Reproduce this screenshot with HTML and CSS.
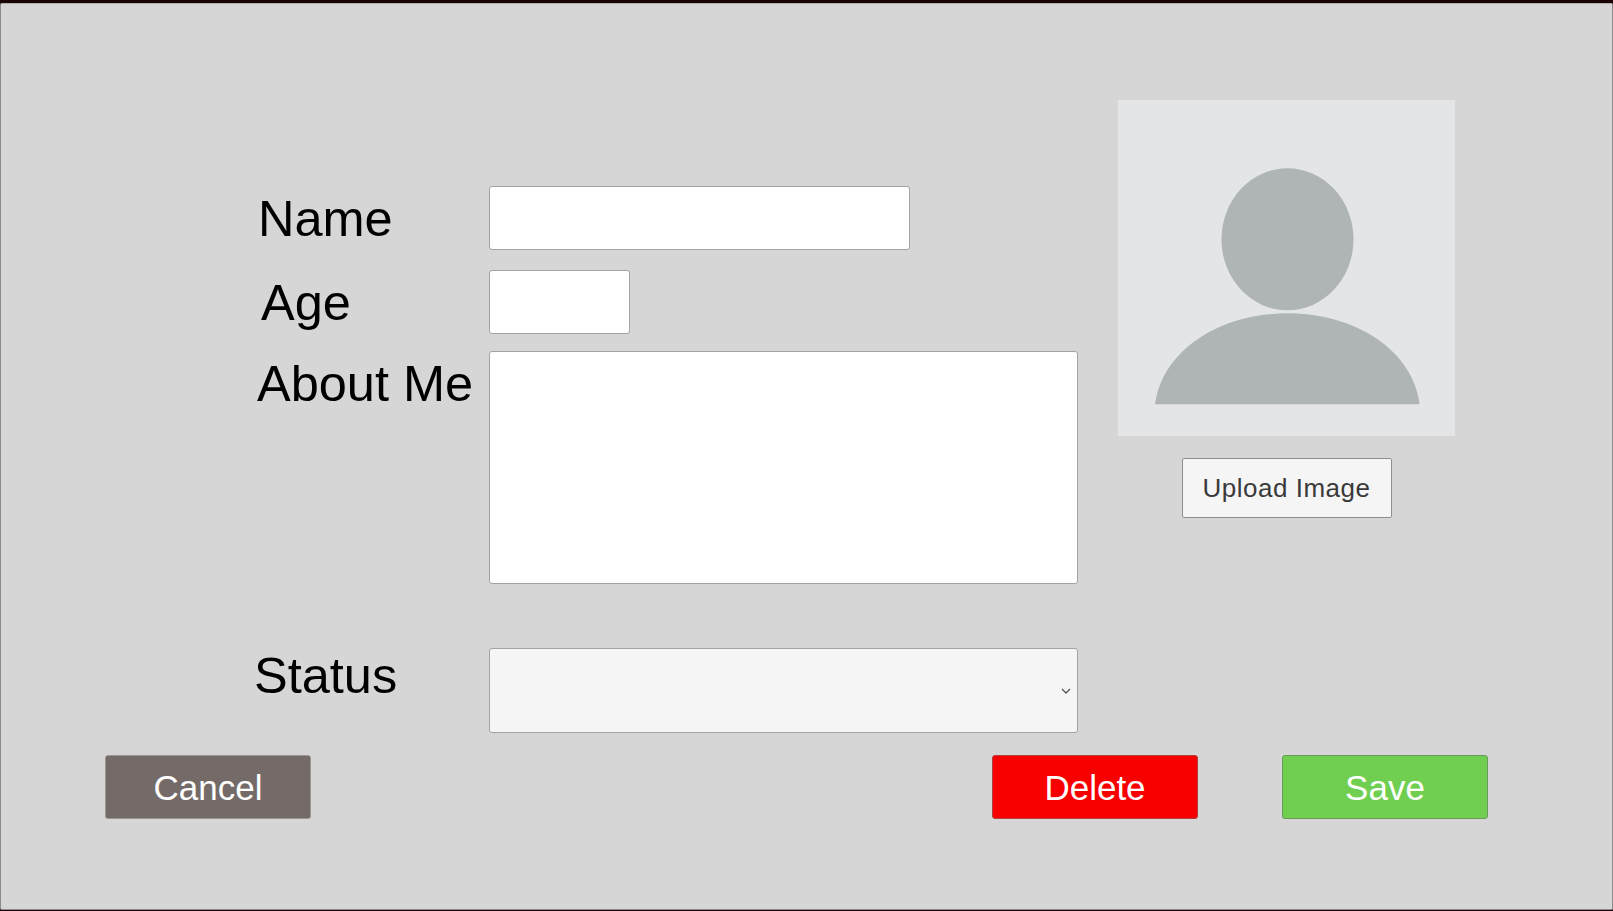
FILE: index.html
```html
<!DOCTYPE html>
<html lang="en">
<head>
    <meta charset="UTF-8">
    <meta name="viewport" content="width=device-width, initial-scale=1.0">
    <title>Edit Profile</title>
    <link rel="stylesheet" href="styles.css">
</head>
<body>

    <div class="panel">
        <div class="content">
            <form class="fields">
                <div class="row row-name">
                    <label class="label label-name" for="nameInput">Name</label>
                    <input class="field field-name" type="text" id="nameInput">
                </div>
                <div class="row row-age">
                    <label class="label label-age" for="ageInput">Age</label>
                    <input class="field field-age" type="text" id="ageInput">
                </div>
                <div class="row row-about">
                    <label class="label" for="aboutInput">About Me</label>
                    <textarea class="field field-about" id="aboutInput"></textarea>
                </div>
                <div class="row row-status">
                    <label class="label label-status" for="statusInput">Status</label>
                    <div class="select-wrap">
                        <select class="field field-status" id="statusInput">
                            <option></option>
                        </select>
                        <svg class="chevron" viewBox="0 0 10 6" width="10" height="6">
                            <path d="M1 1 L5 5 L9 1" fill="none" stroke="#555" stroke-width="1.3"/>
                        </svg>
                    </div>
                </div>
            </form>

            <div class="photo">
                <div class="avatar">
                    <svg viewBox="0 0.2 337 336" width="337" height="336">
                        <ellipse cx="169.5" cy="139.5" rx="66" ry="71" fill="#afb4b7"/>
                        <path d="M37 304.5 C44 251 101 213.5 169.5 213.5 C238 213.5 295 251 301.500 304.5 Z" fill="#afb4b7"/>
                    </svg>
                </div>
                <button class="upload" type="button">Upload Image</button>
            </div>
        </div>

        <div class="actions">
            <button class="btn btn-cancel" type="button">Cancel</button>
            <button class="btn btn-delete" type="button">Delete</button>
            <button class="btn btn-save" type="button">Save</button>
        </div>
    </div>

</body>
</html>
```

FILE: styles.css
```css
* {
    box-sizing: border-box;
}

body {
    background-color: #1a0206;
    font-family: 'Liberation Sans', Arial, sans-serif;
    margin: 0;
    height: 100vh;
    overflow: hidden;
    padding-top: 3px;
}

.panel {
    background-color: #d6d6d6;
    height: 907px;
    border: 1px solid #8c8c8c;
    border-top-color: #b0b0b0;
    border-radius: 2px;
}

.content {
    display: flex;
}

.fields {
    width: 1077px;
    padding-top: 182px;
}

.row {
    display: flex;
    align-items: flex-start;
}

.row-age {
    margin-top: 20px;
}

.row-about {
    margin-top: 17px;
}

.row-status {
    margin-top: 64px;
}

.label {
    width: 488px;
    flex-shrink: 0;
    padding: 4px 0 0 256px;
    font-size: 50.5px;
    line-height: 58px;
    color: #000;
}

.label-name {
    padding-left: 257px;
}

.label-age {
    padding-left: 260px;
}

.label-status {
    padding: 0 0 0 253px;
    margin-top: -1px;
}

.field {
    display: block;
    background-color: #fff;
    border: 1px solid #a3a3a3;
    border-radius: 3px;
    outline: none;
    margin: 0;
    resize: none;
}

.field-name {
    width: 421px;
    height: 64px;
}

.field-age {
    width: 141px;
    height: 64px;
}

.field-about {
    width: 589px;
    height: 233px;
}

.select-wrap {
    position: relative;
    width: 589px;
    height: 85px;
}

.field-status {
    width: 100%;
    height: 100%;
    background-color: #f5f5f5;
    appearance: none;
    -webkit-appearance: none;
}

.chevron {
    position: absolute;
    right: 7px;
    top: 40px;
}

.photo {
    width: 337px;
    margin-left: 40px;
    padding-top: 96px;
    display: flex;
    flex-direction: column;
    align-items: center;
}

.avatar {
    width: 337px;
    height: 336px;
    background-color: #e3e5e7;
}

.avatar svg {
    display: block;
}

.upload {
    width: 210px;
    height: 60px;
    margin-top: 22px;
    padding: 1px 0 0;
    background-color: #f5f5f5;
    border: 1px solid #8f8f8f;
    border-radius: 2px;
    color: #3a3a3a;
    font-family: inherit;
    font-size: 26px;
    letter-spacing: 0.5px;
}

.actions {
    display: flex;
    margin-top: 22px;
    padding: 0 124px 0 104px;
}

.btn {
    width: 206px;
    height: 64px;
    padding: 1px 0 0;
    border: 1px solid #8f8f8f;
    border-radius: 3px;
    color: #fff;
    font-family: inherit;
    font-size: 35px;
    cursor: pointer;
}

.btn-cancel {
    background-color: #746b68;
    border-color: #9a9391;
}

.btn-delete {
    background-color: #f80000;
    border-color: #b04040;
    margin-left: auto;
}

.btn-save {
    background-color: #70cf50;
    border-color: #6a9a5a;
    margin-left: 84px;
}
```
